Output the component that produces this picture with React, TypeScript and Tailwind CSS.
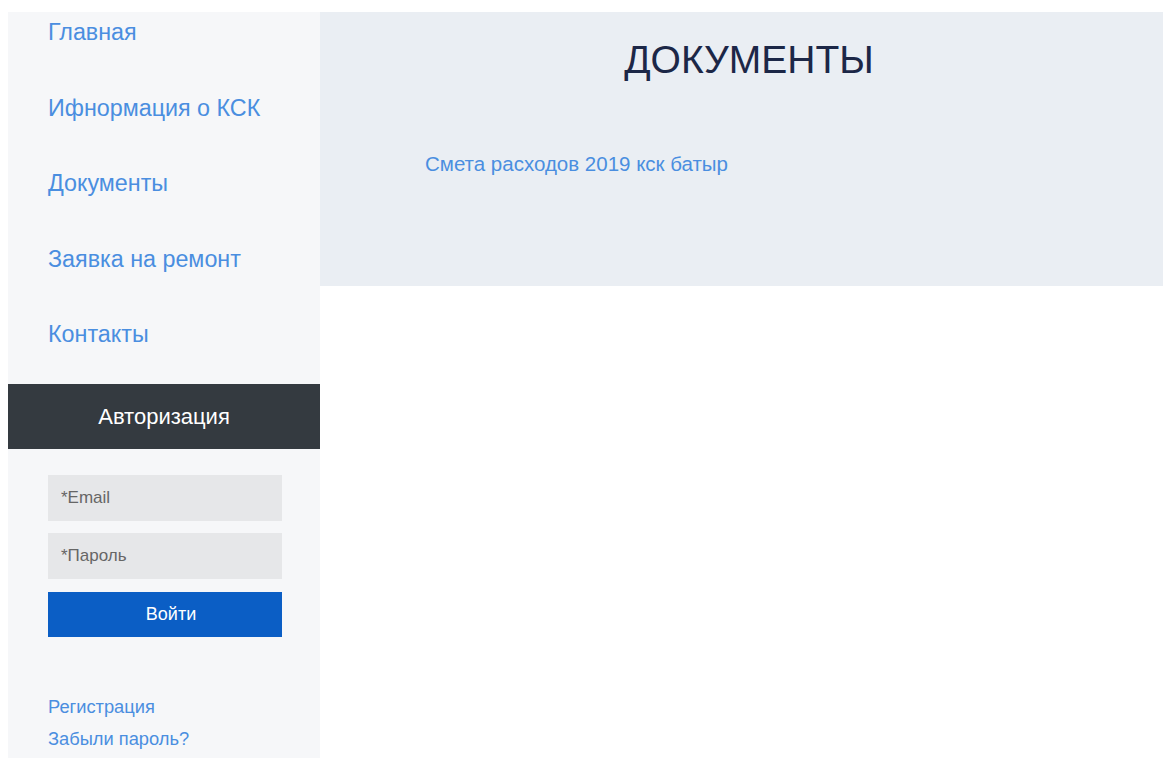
const navItems = ['Главная', 'Ифнормация о КСК', 'Документы', 'Заявка на ремонт', 'Контакты'];

const Sidebar = () => (
  <aside className="w-[312px] shrink-0 bg-[#f6f7f9] min-h-[746px]">
    {/* Menu */}
    <nav className="flex flex-col gap-[49.5px] pt-[7px] pl-[40px]">
      {navItems.map((item) => (
        <a key={item} href="#" className="text-[23.3px] leading-[26px] text-[#4a8ee0]">
          {item}
        </a>
      ))}
    </nav>

    {/* Login box */}
    <div className="mt-[37px]">
      <div className="h-[65px] bg-[#343a40] flex items-center justify-center">
        <span className="text-[22px] text-white">Авторизация</span>
      </div>
      <form className="px-[40px] pt-[26px]" onSubmit={(e) => e.preventDefault()}>
        <input
          type="text"
          placeholder="*Email"
          className="block w-[234px] h-[46px] bg-[#e6e7e9] px-[13px] text-[17px] text-[#555] placeholder:text-[#666] outline-none"
        />
        <input
          type="password"
          placeholder="*Пароль"
          className="block w-[234px] h-[46px] mt-[12px] bg-[#e6e7e9] px-[13px] text-[17px] text-[#555] placeholder:text-[#666] outline-none"
        />
        <button
          type="submit"
          className="block w-[234px] h-[45px] mt-[13px] bg-[#0b5ec5] pl-[12px] text-[18px] text-white"
        >
          Войти
        </button>
        <div className="mt-[54px] flex flex-col">
          <a href="#" className="text-[18.3px] leading-[32px] text-[#4a8ee0]">Регистрация</a>
          <a href="#" className="text-[18.3px] leading-[32px] text-[#4a8ee0]">Забыли пароль?</a>
        </div>
      </form>
    </div>
  </aside>
);

export default function App() {
  return (
    <div
      className="flex bg-white pt-[12px] pl-[8px] min-h-[758px]"
      style={{ fontFamily: '"Liberation Sans", Arial, sans-serif' }}
    >
      <Sidebar />
      <main className="flex-1">
        <section className="h-[274px] bg-[#eaeef3] pt-[24px]">
          <h1 className="pl-[15px] text-center text-[39px] leading-[47px] text-[#1c2747]">ДОКУМЕНТЫ</h1>
          <div className="mt-[69px] pl-[105px]">
            <a href="#" className="text-[20.5px] leading-[24px] text-[#4a8ee0]">
              Смета расходов 2019 кск батыр
            </a>
          </div>
        </section>
      </main>
    </div>
  );
}
